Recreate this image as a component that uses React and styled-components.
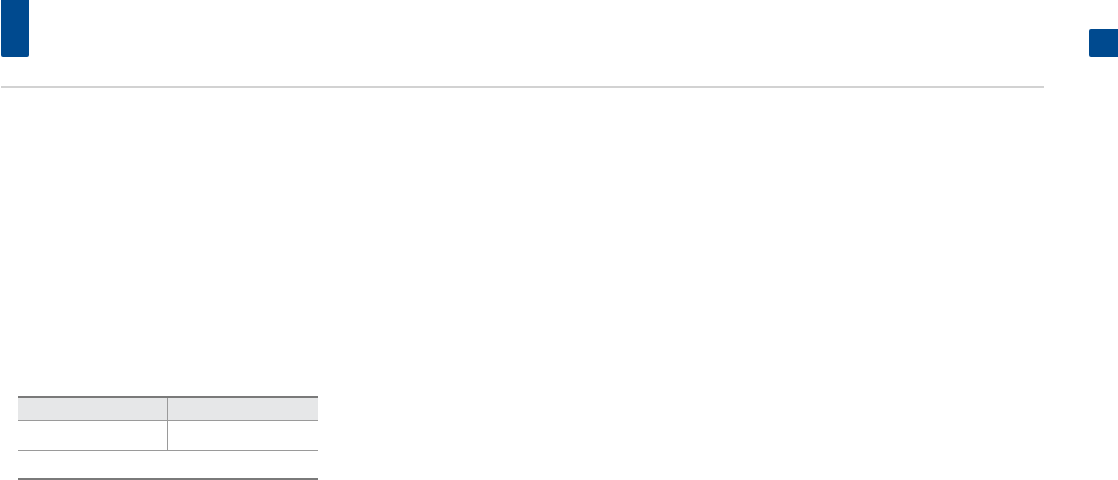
import styled, { createGlobalStyle } from 'styled-components'

const GlobalStyle = createGlobalStyle`
	html, body {
		margin: 0;
		padding: 0;
		background: #ffffff;
		font-family: 'Liberation Sans', Arial, sans-serif;
	}
`

function App() {
	return (
		<>
			<GlobalStyle />
			<S.Page>
				<S.Main>
					<S.Header>
						<S.TitleMark />
					</S.Header>
					<S.Divider />
					<S.Body>
						<S.Table>
							<colgroup>
								<S.Col $width={149} />
								<S.Col $width={151} />
							</colgroup>
							<thead>
								<tr>
									<S.HeadCell></S.HeadCell>
									<S.HeadCell $last></S.HeadCell>
								</tr>
							</thead>
							<tbody>
								<tr>
									<S.Cell></S.Cell>
									<S.Cell $last></S.Cell>
								</tr>
								<tr>
									<S.FootCell colSpan={2}></S.FootCell>
								</tr>
							</tbody>
						</S.Table>
					</S.Body>
				</S.Main>
				<S.Side>
					<S.PageMark />
				</S.Side>
			</S.Page>
		</>
	)
}

export default App

const Page = styled.div`
	display: flex;
	width: 1118px;
	height: 480px;
	overflow: hidden;
`

const Main = styled.div`
	width: 1044px;
	display: flex;
	flex-direction: column;
`

const Header = styled.div`
	height: 86px;
	padding-left: 1px;
`

const TitleMark = styled.div`
	width: 28px;
	height: 57px;
	background: #004a8f;
	border-radius: 0 0 2px 2px;
`

const Divider = styled.div`
	height: 2px;
	margin-left: 1px;
	background: #d2d2d2;
`

const Body = styled.div`
	padding: 308px 0 0 18px;
`

const Table = styled.table`
	width: 300px;
	border-collapse: collapse;
	table-layout: fixed;
	border-top: 2px solid #7a7a7a;
`

const Col = styled.col`
	width: ${({ $width }) => $width}px;
`

const HeadCell = styled.th`
	height: 22px;
	padding: 0;
	background: #e6e7e8;
	border-bottom: 1px solid #9a9a9a;
	border-right: ${({ $last }) => ($last ? 'none' : '1px solid #9a9a9a')};
`

const Cell = styled.td`
	height: 29px;
	padding: 0;
	border-bottom: 1px solid #9a9a9a;
	border-right: ${({ $last }) => ($last ? 'none' : '1px solid #9a9a9a')};
`

const FootCell = styled.td`
	height: 27px;
	padding: 0;
	border-bottom: 2px solid #7a7a7a;
`

const Side = styled.div`
	flex: 1;
	padding: 29px 0 0 45px;
`

const PageMark = styled.div`
	width: 29px;
	height: 28px;
	background: #004a8f;
	border-radius: 2px 0 0 2px;
`

const S = {
	Page,
	Main,
	Header,
	TitleMark,
	Divider,
	Body,
	Table,
	Col,
	HeadCell,
	Cell,
	FootCell,
	Side,
	PageMark,
}
